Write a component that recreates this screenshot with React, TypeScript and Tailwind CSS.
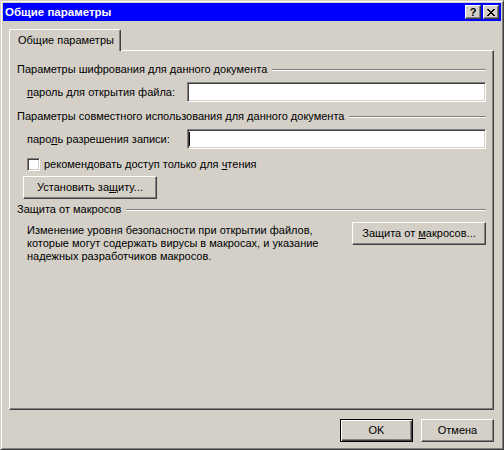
const raised =
  "border border-t-white border-l-white border-r-[#404040] border-b-[#404040] shadow-[inset_-1px_-1px_#808080] bg-[#d4d0c8]";
const sunken =
  "border border-t-[#808080] border-l-[#808080] border-r-white border-b-white shadow-[inset_1px_1px_#404040,inset_-1px_-1px_#d4d0c8] bg-white";

function GroupHeader({ children }: { children: React.ReactNode }) {
  return (
    <div className="flex h-[13px] items-center">
      <span className="whitespace-nowrap">{children}</span>
      <div className="ml-[5px] h-[2px] flex-1 border-t border-b border-t-[#808080] border-b-white" />
    </div>
  );
}

function CloseGlyph() {
  const rows = [
    [0, 1, 6, 7],
    [1, 2, 5, 6],
    [2, 3, 4, 5],
    [3, 4],
    [2, 3, 4, 5],
    [1, 2, 5, 6],
    [0, 1, 6, 7],
  ];
  return (
    <svg width="8" height="7" viewBox="0 0 8 7" shapeRendering="crispEdges">
      {rows.map((cols, y) =>
        cols.map((x) => <rect key={`${x}-${y}`} x={x} y={y} width="1" height="1" fill="#000" />)
      )}
    </svg>
  );
}

export default function App() {
  return (
    <div className="h-[450px] w-[504px] bg-[#d4d0c8] font-['Liberation_Sans',Arial,sans-serif] text-[11px] leading-[13px] text-black">
      <div className="flex h-full flex-col border border-t-[#d4d0c8] border-l-[#d4d0c8] border-r-[#404040] border-b-[#404040] p-[2px] shadow-[inset_1px_1px_#fff,inset_-1px_-1px_#808080]">
        {/* title bar */}
        <div className="flex h-[18px] items-center bg-[#0000ff]">
          <span className="pl-[2px] text-[11.5px] font-bold text-white">Общие параметры</span>
          <div className="ml-auto flex gap-[2px] pr-[2px]">
            <div className={`flex h-[14px] w-[16px] items-center justify-center font-bold ${raised}`}>?</div>
            <div className={`flex h-[14px] w-[16px] items-center justify-center ${raised}`}>
              <CloseGlyph />
            </div>
          </div>
        </div>

        <div className="flex flex-1 flex-col pl-[6px] pr-[7px] pt-[8px]">
          {/* tab strip */}
          <div className="flex">
            <div className="relative z-10 -mb-px h-[22px] w-[112px] rounded-t-[2px] border-t border-l border-r border-t-white border-l-white border-r-[#404040] bg-[#d4d0c8] pl-[8px] pt-[4px] shadow-[inset_-1px_0_#808080]">
              Общие параметры
            </div>
          </div>

          {/* tab panel */}
          <div className="flex h-[360px] flex-col border border-t-white border-l-white border-r-[#404040] border-b-[#404040] px-[7px] shadow-[inset_-1px_-1px_#808080]">
            <div className="mt-[12px]">
              <GroupHeader>Параметры шифрования для данного документа</GroupHeader>
            </div>
            <div className="mt-[6px] flex h-[20px] items-center pl-[10px]">
              <span className="w-[160px] whitespace-nowrap">
                <u>п</u>ароль для открытия файла:
              </span>
              <div className={`h-[20px] flex-1 ${sunken}`} />
            </div>

            <div className="mt-[8px]">
              <GroupHeader>Параметры совместного использования для данного документа</GroupHeader>
            </div>
            <div className="mt-[6px] flex h-[20px] items-center pl-[10px]">
              <span className="w-[160px] whitespace-nowrap">
                паро<u>л</u>ь разрешения записи:
              </span>
              <div className={`flex h-[20px] flex-1 items-center ${sunken}`}>
                <div className="ml-[1px] h-[14px] w-px bg-black" />
              </div>
            </div>

            <div className="mt-[9px] flex h-[13px] items-center pl-[10px]">
              <div className={`h-[13px] w-[13px] ${sunken}`} />
              <span className="ml-[4px] whitespace-nowrap">
                рекомендовать доступ только для <u>ч</u>тения
              </span>
            </div>

            <div className="mt-[5px] pl-[6px]">
              <div className={`flex h-[23px] w-[134px] items-center justify-center ${raised}`}>
                <span className="whitespace-nowrap">
                  Установить за<u>щ</u>иту...
                </span>
              </div>
            </div>

            <div className="mt-[4px]">
              <GroupHeader>Защита от макросов</GroupHeader>
            </div>
            <div className="mt-[6px] flex">
              <div className="whitespace-nowrap pl-[10px] pt-[2px]">
                Изменение уровня безопасности при открытии файлов,
                <br />
                которые могут содержать вирусы в макросах, и указание
                <br />
                надежных разработчиков макросов.
              </div>
              <div className={`ml-auto flex h-[23px] w-[134px] items-center justify-center ${raised}`}>
                <span className="whitespace-nowrap">
                  Защита от <u>м</u>акросов...
                </span>
              </div>
            </div>
          </div>

          {/* dialog buttons */}
          <div className="mt-[9px] flex justify-end gap-[8px]">
            <div className="flex h-[23px] w-[73px] items-center justify-center border border-black bg-[#d4d0c8] shadow-[inset_1px_1px_#fff,inset_-1px_-1px_#404040,inset_-2px_-2px_#808080]">
              OK
            </div>
            <div className={`flex h-[23px] w-[73px] items-center justify-center ${raised}`}>Отмена</div>
          </div>
        </div>
      </div>
    </div>
  );
}
